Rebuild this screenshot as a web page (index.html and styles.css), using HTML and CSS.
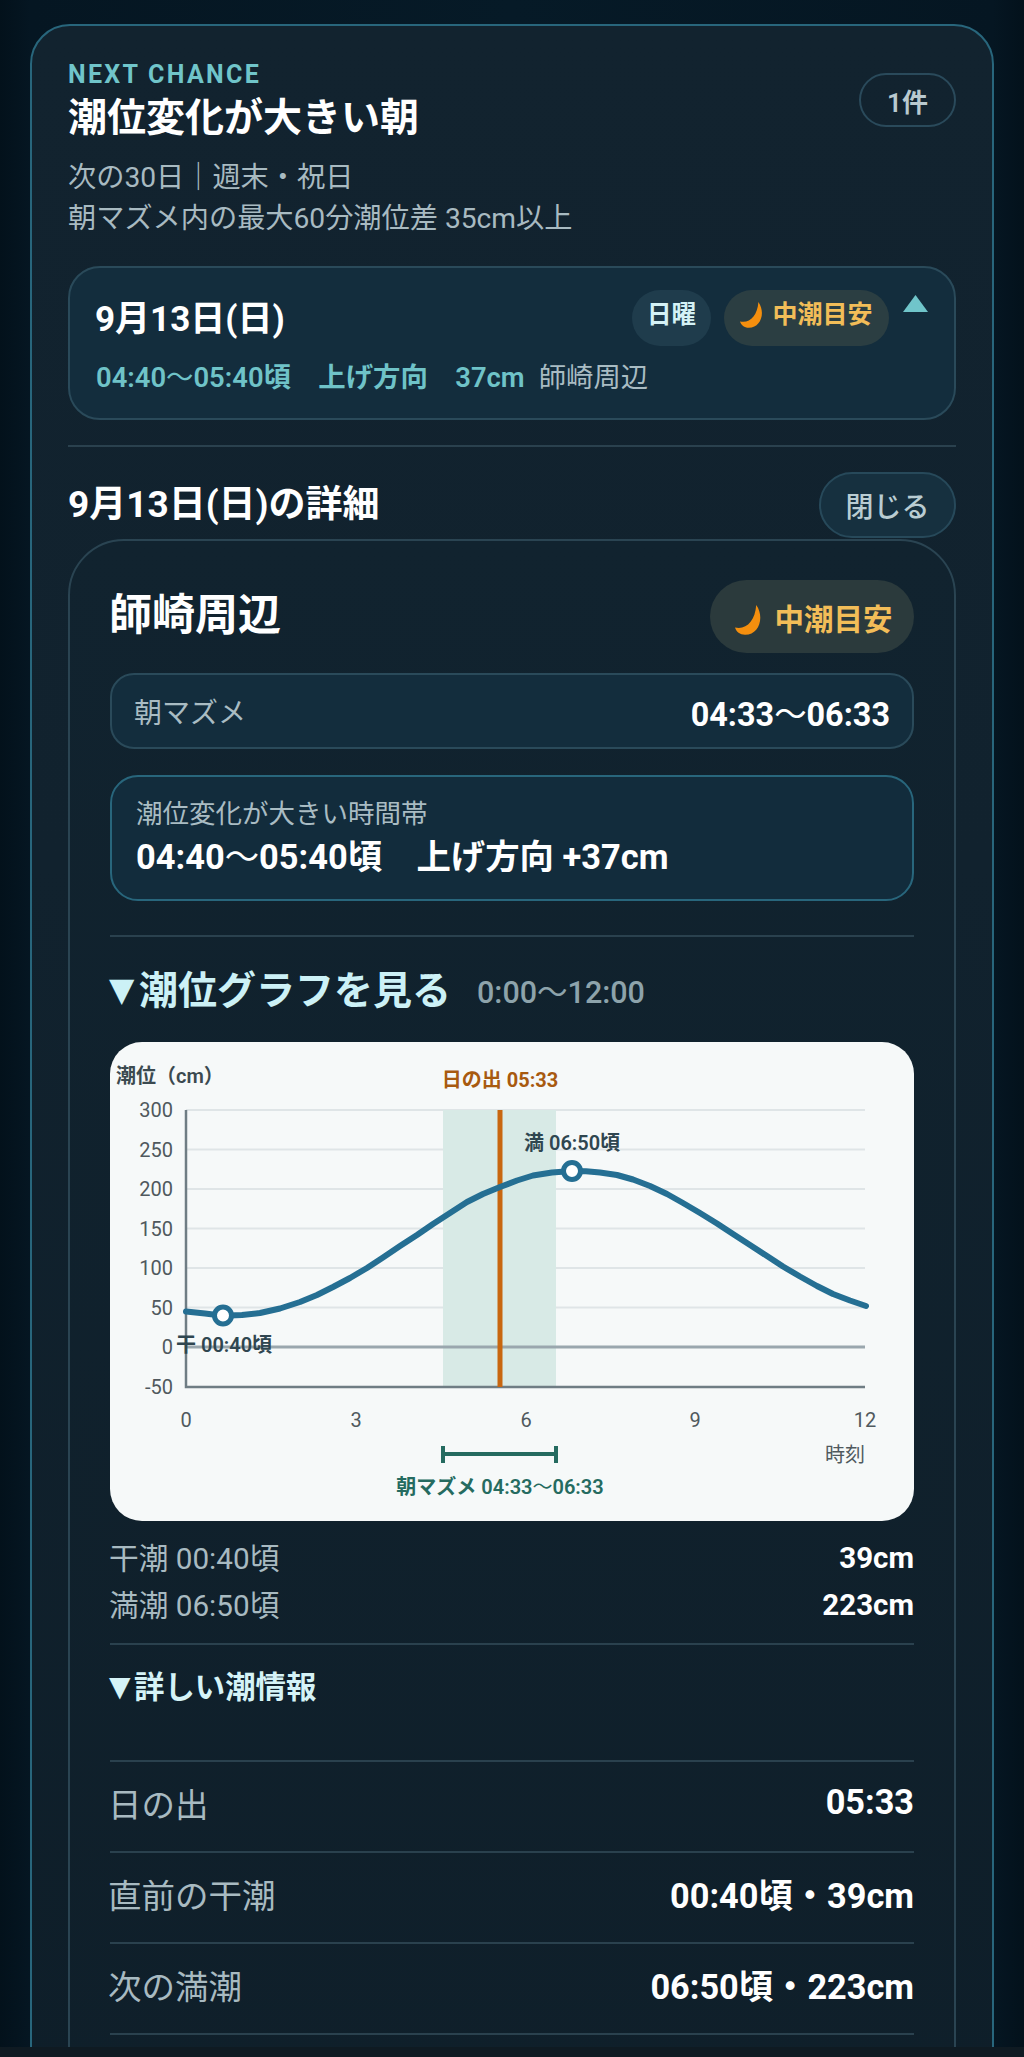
FILE: index.html
```html
<!DOCTYPE html>
<html lang="ja">
<head>
<meta charset="utf-8">
<title>潮位変化が大きい朝</title>
<link rel="stylesheet" href="styles.css">
</head>
<body>
<div class="viewport">
  <section class="card">
    <header class="head">
      <div>
        <div class="eyebrow">NEXT CHANCE</div>
        <h1 class="title">潮位変化が大きい朝</h1>
        <p class="sub">次の30日｜週末・祝日<br>朝マズメ内の最大60分潮位差 35cm以上</p>
      </div>
      <span class="count">1件</span>
    </header>

    <div class="event">
      <div class="event-top">
        <div class="event-date">9月13日(日)</div>
        <div class="event-tags">
          <span class="chip chip-day"><span class="chip-text">日曜</span></span>
          <span class="chip chip-moon">
            <svg class="moon" viewBox="0 0 24 24"><path d="M17 0C24 10 19 24 8 23.800C4 23.700 1 21.500 0 18C9 20 16 13 17 0Z"/></svg>
            <span class="chip-text">中潮目安</span>
          </span>
          <svg class="caret" viewBox="0 0 25 17"><polygon points="12.500,0 25,17 0,17"/></svg>
        </div>
      </div>
      <div class="event-line"><span class="accent">04:40<span class="wave">〜</span>05:40頃　上げ方向　37cm</span><span class="place">師崎周辺</span></div>
    </div>

    <div class="rule rule-a"></div>

    <div class="detail-head">
      <h2 class="detail-title">9月13日(日)の詳細</h2>
      <button class="close">閉じる</button>
    </div>

    <div class="inner">
      <div class="place-head">
        <h3 class="place-title">師崎周辺</h3>
        <span class="chip-big">
          <svg class="moon-big" viewBox="0 0 24 24"><path d="M17 0C24 10 19 24 8 23.800C4 23.700 1 21.500 0 18C9 20 16 13 17 0Z"/></svg>
          中潮目安
        </span>
      </div>

      <div class="mazume"><span class="mazume-label">朝マズメ</span><span class="mazume-value">04:33<span class="wave">〜</span>06:33</span></div>

      <div class="highlight">
        <div class="highlight-label">潮位変化が大きい時間帯</div>
        <div class="highlight-value">04:40<span class="wave">〜</span>05:40頃　上げ方向 +37cm</div>
      </div>

      <div class="rule rule-b"></div>

      <div class="graph-head"><span class="graph-title"><span class="arrow-lg">▼</span>潮位グラフを見る</span><span class="graph-range">0:00<span class="wave">〜</span>12:00</span></div>

      <div class="chart">
        <svg class="chart-svg" viewBox="0 0 804 479">
          <g class="grid">
            <line x1="76" x2="755" y1="68" y2="68"/>
            <line x1="76" x2="755" y1="107.500" y2="107.500"/>
            <line x1="76" x2="755" y1="147" y2="147"/>
            <line x1="76" x2="755" y1="186.500" y2="186.500"/>
            <line x1="76" x2="755" y1="226" y2="226"/>
            <line x1="76" x2="755" y1="265.500" y2="265.500"/>
          </g>
          <rect class="shade" x="333" y="68" width="113" height="277"/>
          <line class="zero" x1="76" x2="755" y1="305" y2="305"/>
          <path class="axis" d="M76 68V345H755"/>
          <line class="sun" x1="390" x2="390" y1="68" y2="345"/>
          <polyline class="tide" points="76,269.500 95,271.500 113,273.700 132,273 150,271 170,266.500 190,260 207,253 223,245 240,236 257,226 273,215.500 290,204 307,193 323,182 340,171 357,160 373,152 390,145 407,138.500 423,133.500 442,130.500 462,129 476,129.200 490,130.500 507,133 523,137.500 540,144 557,152 573,161 590,171 607,181.500 623,192 640,203 657,214 673,224.500 690,234.500 707,244 723,252 740,258.500 756,264"/>
          <circle class="dot" cx="113" cy="273.500" r="8.500"/>
          <circle class="dot" cx="462" cy="129" r="8.500"/>
          <text class="tick end" x="63" y="75">300</text>
          <text class="tick end" x="63" y="114.500">250</text>
          <text class="tick end" x="63" y="154">200</text>
          <text class="tick end" x="63" y="193.500">150</text>
          <text class="tick end" x="63" y="233">100</text>
          <text class="tick end" x="63" y="272.500">50</text>
          <text class="tick end" x="63" y="312">0</text>
          <text class="tick end" x="63" y="352">-50</text>
          <text class="tick mid" x="76" y="385">0</text>
          <text class="tick mid" x="246" y="385">3</text>
          <text class="tick mid" x="416" y="385">6</text>
          <text class="tick mid" x="585" y="385">9</text>
          <text class="tick mid" x="755" y="385">12</text>
          <text class="tick end" x="755" y="420">時刻</text>
          <text class="unit" x="6" y="41">潮位（cm）</text>
          <text class="sun-label mid" x="390" y="45">日の出 05:33</text>
          <text class="peak" x="414" y="108">満 06:50頃</text>
          <text class="peak" x="66" y="310">干 00:40頃</text>
          <path class="range" d="M333 412H446M333 404V421M446 404V421"/>
          <text class="range-label mid" x="390" y="452">朝マズメ 04:33<tspan class="wave">〜</tspan>06:33</text>
        </svg>
      </div>

      <div class="tide-rows">
        <div class="tide-row"><span class="tide-name">干潮 00:40頃</span><span class="tide-val">39cm</span></div>
        <div class="tide-row"><span class="tide-name">満潮 06:50頃</span><span class="tide-val">223cm</span></div>
      </div>

      <div class="rule rule-c"></div>
      <div class="more-title"><span class="arrow-sm">▼</span>詳しい潮情報</div>

      <div class="info-list">
        <div class="info"><span class="info-name">日の出</span><span class="info-val">05:33</span></div>
        <div class="info"><span class="info-name">直前の干潮</span><span class="info-val">00:40頃・39cm</span></div>
        <div class="info"><span class="info-name">次の満潮</span><span class="info-val">06:50頃・223cm</span></div>
      </div>
    </div>
  </section>
</div>
<div class="band"></div>
</body>
</html>
```

FILE: styles.css
```css
* { box-sizing: border-box; }
html, body { margin: 0; padding: 0; }
body {
  width: 1024px;
  height: 2057px;
  overflow: hidden;
  background: #0f1a22;
  font-family: Roboto, "Noto Sans CJK JP", sans-serif;
  color: #fff;
}
h1, h2, h3, p { margin: 0; }
.wave { font-weight: 400; }

.viewport {
  height: 2047px;
  overflow: hidden;
  padding: 24px 30px 0;
  background: linear-gradient(90deg, #03111b 0, #051622 3%, #061a27 50%, #051622 97%, #03111b 100%), #04101a;
}
.card {
  height: 2100px;
  border: 2px solid #28667c;
  border-radius: 40px;
  padding: 0 36px;
  background: linear-gradient(180deg, #12232f 0, #11222e 40%, #0e1e29 100%);
}

.head { display: flex; justify-content: space-between; align-items: flex-start; padding-top: 37px; }
.eyebrow { font-size: 25px; line-height: 24px; font-weight: 700; letter-spacing: 2.300px; color: #70c5ca; }
.title { margin-top: 8px; font-size: 39px; line-height: 46px; font-weight: 700; color: #fff; }
.sub { margin-top: 16px; font-size: 28.200px; line-height: 41px; color: #a8bac1; }
.count {
  display: flex; align-items: center; justify-content: center;
  width: 97px; height: 54px; margin-top: 10px;
  border: 2px solid #2a4a5b; border-radius: 27px;
  font-size: 26px; font-weight: 600; color: #b9c9cf;
}

.event {
  margin-top: 27px;
  height: 154px;
  padding: 22px 26px 0;
  border: 2px solid #2a4a5a;
  border-radius: 32px;
  background: #132d3d;
}
.event-top { display: flex; justify-content: space-between; align-items: center; }
.event-date { font-size: 35px; font-weight: 700; color: #fff; margin: -5px 0 0 -1px; }
.event-tags { display: flex; align-items: flex-start; }
.chip {
  display: flex; align-items: center; justify-content: center;
  height: 56px; border-radius: 28px;
  font-size: 24.500px; font-weight: 700;
}
.chip-text { margin-top: -12px; }
.chip-day { width: 79px; background: #1f3c4c; color: #d4f2f6; }
.chip-moon { width: 165px; margin-left: 13px; gap: 6px; background: #2b3e42; color: #f2bd58; font-size: 25px; }
.moon { width: 26px; height: 26px; fill: #f58f0e; margin-top: -7px; }
.caret { width: 25px; height: 17px; margin: 5px 0 0 14px; fill: #70c5ca; }
.event-line { display: flex; gap: 14px; margin-top: 12px; font-size: 27.400px; line-height: 40px; }
.accent { font-weight: 600; color: #6fc3c8; }
.place { color: #a9bcc3; }

.rule { height: 2px; background: #2a414e; }
.rule-a { margin-top: 25px; }

.detail-head { display: flex; justify-content: space-between; align-items: center; margin-top: 25px; }
.detail-title { font-size: 37px; line-height: 66px; font-weight: 700; }
.close {
  width: 137px; height: 66px;
  border: 2px solid #27495a; border-radius: 33px;
  background: #16303f;
  font: 500 28px Roboto, "Noto Sans CJK JP", sans-serif;
  color: #b9ccd2;
}

.inner {
  margin-top: 1px;
  height: 1600px;
  padding: 39px 40px 0;
  border: 2px solid #2a4452;
  border-radius: 56px;
  background: linear-gradient(180deg, #11232f 0, #0f1f2a 100%);
}
.place-head { display: flex; justify-content: space-between; align-items: center; }
.place-title { font-size: 43px; font-weight: 700; line-height: 60px; margin: -4px 0 0 -1px; }
.chip-big {
  display: flex; align-items: center; justify-content: center; gap: 9px;
  width: 204px; height: 73px; padding-left: 4px; border-radius: 37px;
  background: #2b3a3c; color: #f2bd58;
  font-size: 29.500px; font-weight: 700;
}
.moon-big { width: 30px; height: 30px; fill: #f58f0e; margin-top: 6px; }

.mazume {
  display: flex; justify-content: space-between; align-items: center;
  margin-top: 20px; height: 76px; padding: 0 22px;
  border: 2px solid #2a4a5a; border-radius: 24px;
  background: #132d3d;
}
.mazume-label { font-size: 28px; color: #a9bcc3; }
.mazume-value { font-size: 32.400px; font-weight: 700; }

.highlight {
  margin-top: 26px; height: 126px; padding: 17px 24px 0;
  border: 2px solid #28667c; border-radius: 28px;
  background: #122c3c;
}
.highlight-label { font-size: 26.500px; line-height: 40px; color: #a9bcc3; }
.highlight-value { margin-top: 1px; font-size: 34.400px; line-height: 44px; font-weight: 700; }

.rule-b { margin-top: 34px; }

.graph-head { display: flex; align-items: center; gap: 26px; margin-top: 25px; height: 50px; }
.graph-title { font-size: 39px; font-weight: 600; color: #ccf1f6; white-space: nowrap; }
.arrow-lg { display: inline-block; width: 30px; font: 33px "DejaVu Sans", sans-serif; vertical-align: 3px; margin-left: -1px; }
.arrow-sm { display: inline-block; width: 25px; font: 28px "DejaVu Sans", sans-serif; vertical-align: 2px; margin-left: -1px; }
.graph-range { font-size: 30.500px; font-weight: 500; color: #8da3ab; margin-top: 6px; }

.chart {
  margin-top: 30px; height: 479px;
  border-radius: 32px; background: #f6f9f9; overflow: hidden;
}
.chart-svg { display: block; width: 804px; height: 479px; font-family: Roboto, "Noto Sans CJK JP", sans-serif; }
.grid line { stroke: #dfe5e7; stroke-width: 2; }
.shade { fill: #d8eae6; }
.zero { stroke: #9aa7ae; stroke-width: 3; }
.axis { fill: none; stroke: #6f7d84; stroke-width: 2.500; }
.sun { stroke: #c8660f; stroke-width: 5; }
.tide { fill: none; stroke: #256f93; stroke-width: 6; stroke-linejoin: round; stroke-linecap: round; }
.dot { fill: #fff; stroke: #256f93; stroke-width: 5; }
.tick { font-size: 20px; fill: #50595e; }
.end { text-anchor: end; }
.mid { text-anchor: middle; }
.unit { font-size: 20px; font-weight: 600; fill: #3b4a50; }
.sun-label { font-size: 20px; font-weight: 700; fill: #a85a10; }
.peak { font-size: 20px; font-weight: 600; fill: #2f4650; }
.range { fill: none; stroke: #256b60; stroke-width: 4; }
.range-label { font-size: 20px; font-weight: 600; fill: #256b60; }

.tide-rows { margin-top: 13px; }
.tide-row { display: flex; justify-content: space-between; align-items: center; height: 47px; }
.tide-name { font-size: 29.700px; color: #a8bac1; margin: -2px 0 0 -1px; }
.tide-val { font-size: 29.500px; font-weight: 700; }

.rule-c { margin-top: 15px; }
.more-title { margin-top: 22px; font-size: 30.400px; line-height: 42px; font-weight: 600; color: #d5f3f7; }

.info-list { margin-top: 51px; border-bottom: 2px solid #2a414e; }
.info {
  display: flex; justify-content: space-between; align-items: center;
  height: 91px; padding-bottom: 9px; border-top: 2px solid #2a414e;
}
.info-name { font-size: 33.500px; color: #a8bac1; margin-left: -2px; }
.info-val { font-size: 34.300px; font-weight: 700; }

.band { height: 10px; background: #0f1a22; }
```
